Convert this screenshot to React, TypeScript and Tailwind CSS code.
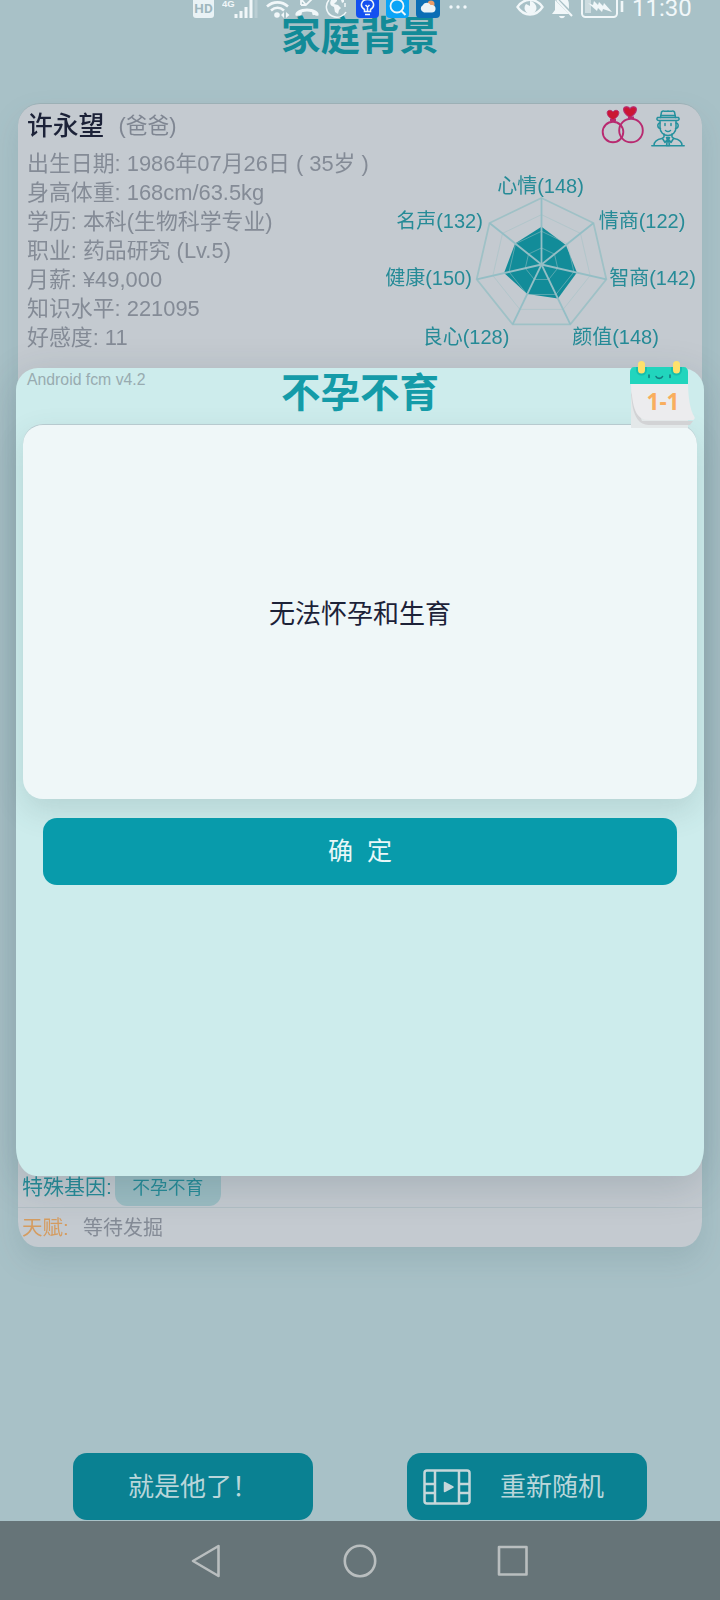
import type { ReactNode } from 'react';

const PROFILE_ROWS = [
  '出生日期: 1986年07月26日 ( 35岁 )',
  '身高体重: 168cm/63.5kg',
  '学历: 本科(生物科学专业)',
  '职业: 药品研究 (Lv.5)',
  '月薪: ¥49,000',
  '知识水平: 221095',
  '好感度: 11',
];

// Label positions are relative to the chart's own canvas
const STATS = [
  { name: '心情', value: 148, x: 160.5, y: 23 },
  { name: '情商', value: 122, x: 262, y: 58 },
  { name: '智商', value: 142, x: 272.5, y: 115 },
  { name: '颜值', value: 148, x: 235.5, y: 174 },
  { name: '良心', value: 128, x: 86, y: 174 },
  { name: '健康', value: 150, x: 48.5, y: 115 },
  { name: '名声', value: 132, x: 59.5, y: 58 },
];

const CENTER = { x: 161.5, y: 94.5 };
const RADIUS = 66.5;
const MAX_STAT = 260;

const pointAt = (index: number, radius: number) => {
  const angle = (Math.PI * 2 * index) / STATS.length - Math.PI / 2;
  return [CENTER.x + radius * Math.cos(angle), CENTER.y + radius * Math.sin(angle)];
};

const ringPoints = (radius: number) => STATS.map((_, i) => pointAt(i, radius).join(',')).join(' ');

const RadarChart = () => (
  <svg width="320" height="185" viewBox="0 0 320 185" className="shrink-0">
    <polygon
      points={STATS.map((s, i) => pointAt(i, (s.value / MAX_STAT) * RADIUS).join(',')).join(' ')}
      fill="#128c99"
    />
    {[0.25, 0.5, 0.75, 1].map((scale) => (
      <polygon
        key={scale}
        points={ringPoints(RADIUS * scale)}
        fill="none"
        stroke="#9fc1c6"
        strokeOpacity={scale === 1 ? 1 : 0.5}
        strokeWidth={scale === 1 ? 1.8 : 1}
      />
    ))}
    {STATS.map((s, i) => {
      const [x, y] = pointAt(i, RADIUS);
      return <line key={s.name} x1={CENTER.x} y1={CENTER.y} x2={x} y2={y} stroke="#94bec5" strokeWidth="1.8" />;
    })}
    {STATS.map((s) => (
      <text key={s.name} x={s.x} y={s.y} textAnchor="middle" fontSize="20" fill="#268b97">
        {s.name}({s.value})
      </text>
    ))}
  </svg>
);

const HEART = 'M0 4.5C-4.5 1.5-5.8-.5-5.8-2.8-5.8-5.6-1.6-6 0-3.4 1.6-6 5.8-5.6 5.8-2.8 5.8-.5 4.5 1.5 0 4.5Z';

const RingsIcon = () => (
  <svg width="44" height="38" viewBox="0 0 44 38" fill="none" stroke="#b82a70" strokeWidth="1.9">
    <circle cx="12" cy="26" r="10.3" />
    <circle cx="30" cy="24.5" r="11.8" />
    <path d="M9 14h6M27 11.5h6" />
    <path d={HEART} transform="translate(12 9.5)" fill="#cb1633" strokeWidth="1" />
    <path d={HEART} transform="translate(29 6.5) scale(1.1)" fill="#cb1633" strokeWidth="1" />
  </svg>
);

const GentlemanIcon = () => (
  <svg width="34" height="38" viewBox="0 0 34 38" fill="none" stroke="#25919e" strokeWidth="1.5" strokeLinecap="round" strokeLinejoin="round">
    <path d="M.8 36.800h32.400M3 36.500c0-4 2-6 8-7l2-1.500v-3M31 36.500c0-4-2-6-8-7L21 28v-3" />
    <path d="M9 12v6.500c0 4.500 3.500 8 8 8s8-3.500 8-8V12" />
    <path d="M9 14c-3 0-3 5.500.5 5.500M25 14c3 0 3 5.500-.5 5.500" />
    <path d="M9.500 8.500 10.500 3c1.500-2 3 0 6.500-1 3.500 1 5-1 6.500 1l1 5.500" />
    <path d="M6.500 8.500h21c1.200 1.500.5 3-1 3h-19c-1.500 0-2.200-1.500-1-3ZM10 6.500h14" />
    <path d="M14 14.500v2M20 14.500v2M14.500 21.500c1.500 1.300 3.500 1.300 5 0" />
    <path d="m11.500 29.500 2.500 4 3-4 3 4 2.500-4M15.500 28.500h3L17.500 31l1 5.500h-3l1-5.500-1-2.500" />
  </svg>
);

const CalendarIcon = () => (
  <svg width="66" height="68" viewBox="0 0 66 68">
    <path d="M1 20h57v47H1Z" fill="#e3e8e9" />
    <path d="M1 31c1 16 3 24 9 30 3 2.500 7 3 12 3h38l3-4H12Z" fill="#d2d3d5" />
    <path d="M1 20h57c0 16 2 29 6.500 36 .5 1.500 0 3-2 3H19C6 59 2 48 1 20Z" fill="#ececee" />
    <path d="M0 23V11c0-3 1.500-5 4.500-5h49c3 0 4.500 2 4.500 5v12Z" fill="#21d5bd" />
    <path d="M6 6v3a5.500 5.500 0 0 0 11 0V6M41 6v3a5.500 5.500 0 0 0 11 0V6" fill="#16bfae" />
    <rect x="8" width="7" height="12.500" rx="3.500" fill="#ffe16b" />
    <rect x="43" width="7" height="12.500" rx="3.500" fill="#ffe16b" />
    <g fill="none" stroke="#147c80" strokeWidth="1.600" strokeLinecap="round">
      <path d="M19 14v2.500M40 14v2.500M26 15.500c1 2.500 5.500 2.500 6.500 0" />
    </g>
    <text x="33" y="49" textAnchor="middle" fontSize="22.500" fontWeight="700" fill="#f9ae5e" className="[font-family:'Noto_Sans',sans-serif]">
      1-1
    </text>
  </svg>
);

const FilmIcon = () => (
  <svg width="48" height="36" viewBox="0 0 48 36" fill="none" stroke="#c6d7da" strokeWidth="2.500">
    <rect x="1.500" y="1.500" width="45" height="33" rx="2.500" />
    <path d="M12 1.500v33M36 1.500v33M1.500 15H12M1.500 24H12M36 15h10.500M36 24h10.500" />
    <path d="M21.500 13.500v9l8.500-4.500Z" fill="#c6d7da" strokeWidth="1.500" strokeLinejoin="round" />
  </svg>
);

const StatusIcon = ({ width, className, children }: { width: number; className?: string; children: ReactNode }) => (
  <svg
    width={width}
    height="20"
    viewBox={`0 0 ${width} 20`}
    fill="none"
    stroke="#f1f7f9"
    strokeWidth="1.800"
    className={`shrink-0 ${className ?? ''}`}
  >
    {children}
  </svg>
);

const StatusBar = () => (
  <div className="absolute inset-x-0 top-0 flex h-5 items-start pl-[193px]">
    <StatusIcon width={21}>
      <rect y="-5" width="21" height="23" rx="3" fill="#e9f2f5" stroke="none" />
      <text x="10.500" y="13" textAnchor="middle" fontSize="13.500" fontWeight="700" fill="#9eb7be" stroke="none" className="[font-family:Roboto,sans-serif]">HD</text>
    </StatusIcon>
    <StatusIcon width={37} className="ml-2">
      <text x="0" y="6.500" fontSize="9.500" fontWeight="700" fill="#f1f7f9" stroke="none">4G</text>
      <path d="M14 18v-4M19 18v-7M24 18V7M29 18V0" strokeWidth="3" />
      <path d="M34 18V0" strokeWidth="3" strokeOpacity=".25" />
    </StatusIcon>
    <StatusIcon width={25} className="ml-[7px]">
      <path d="M1 6.500c6-5.500 15-5.500 21 0M5 10.500c4-3.500 9-3.500 13 0" strokeWidth="2.600" />
      <circle cx="11" cy="15" r="2.800" fill="#f1f7f9" stroke="none" />
      <path d="m18 12-3 3 3 3ZM20 12l3.500 3-3.500 3Z" fill="#f1f7f9" stroke="none" />
    </StatusIcon>
    <StatusIcon width={24} className="ml-1">
      <path d="M6-1 11 5 18-2M6 5V0M6 5h4" />
      <path d="M.5 15.500c-.5-2 .5-3.500 2.500-4.700 5-3.200 13-3.200 18 0 2 1.200 3 2.700 2.500 4.700-2 .5-4.500 0-6-.7l-.5-2.500c-3.500-1-6.500-1-10 0l-.5 2.500c-1.500.7-4 1.200-6 .7Z" fill="#f1f7f9" stroke="none" />
    </StatusIcon>
    <StatusIcon width={24} className="ml-1.5">
      <path d="M4 0C-.5 5 1 13 7 16c6 3 12 0 14-4M20 3v4" strokeWidth="1.500" />
      <path d="M6 0C4 4 6 6 9 7l1 5 3 2 1-4 2-2-3-3-4-1 3-3V0ZM16 0l1 3 2-1V0Z" fill="#f1f7f9" stroke="none" />
    </StatusIcon>
    <StatusIcon width={23} className="ml-[7px]">
      <rect y="-5" width="23" height="23" rx="4" fill="#1450f0" stroke="none" />
      <path d="M8.500 11.500V9.500C3 6 5.500-.5 11.500-.5s8.500 6.500 3 10v2ZM9 14.500h5M11.500 11V6M9.500 5l2 2 2-2" strokeWidth="1.500" />
    </StatusIcon>
    <StatusIcon width={23} className="ml-[7px]">
      <rect y="-5" width="23" height="23" rx="4" fill="#0ba4f7" stroke="none" />
      <circle cx="11" cy="6" r="6.500" />
      <path d="m15.500 11 4 4" strokeWidth="2" />
    </StatusIcon>
    <StatusIcon width={24} className="ml-[7px]">
      <rect y="-5" width="24" height="23" rx="4" fill="#0b6db5" stroke="none" />
      <circle cx="15" cy="4" r="3.500" fill="#e99b69" stroke="none" />
      <path d="M8 12.500a4 4 0 0 1-1-7.500c1.500-3 6-3 7.500 0 4-.5 5.500 2 5 4.500-.3 2-1.500 3-3.500 3Z" fill="#eaf2f7" stroke="none" />
    </StatusIcon>
    <StatusIcon width={18} className="ml-[9px]">
      <g fill="#f1f7f9" stroke="none">
        <circle cx="2" cy="7" r="1.700" />
        <circle cx="9" cy="7" r="1.700" />
        <circle cx="16" cy="7" r="1.700" />
      </g>
    </StatusIcon>
    <StatusIcon width={28} className="ml-[49px]">
      <path d="M1.500 7C8-2.500 20-2.500 26.500 7 20 17 8 17 1.500 7Z" strokeWidth="2.300" />
      <path d="M14 1v5l-4-2a6 6 0 1 0 9 0c-1.500-2-3-3-5-3Z" fill="#f1f7f9" stroke="none" />
    </StatusIcon>
    <StatusIcon width={22} className="ml-[7px]">
      <path d="M4 0 18 14H1l3-4ZM8-1h8c2 2 2 4 2 10ZM8 16h6c-1 3-5 3-6 0Z" fill="#f1f7f9" stroke="none" />
      <path d="m6 0 15 16" strokeWidth="2" />
    </StatusIcon>
    <StatusIcon width={44} className="ml-2">
      <rect x="1" y="-4" width="35" height="21" rx="3.500" strokeWidth="2" />
      <path d="M4 0h6v13H4Z" fill="#f1f7f9" fillOpacity=".5" stroke="none" />
      <path d="m7 3 9 8 1-3 4 4 1-3 9 3-8-9-1 3-4-4-1 3-4-4-1 4Z" fill="#f1f7f9" stroke="none" />
      <path d="M41 1v11" strokeWidth="2.600" />
    </StatusIcon>
    <span className="ml-[7px] text-[24px] leading-[17px] text-[#f1f7f9] [font-family:Roboto,sans-serif]">11:30</span>
  </div>
);

const NavBar = () => (
  <div className="flex h-[79px] items-center bg-[#667478] pl-[190px]">
    <svg width="338" height="36" viewBox="0 0 338 36" fill="none" stroke="#b9bebf" strokeWidth="2.600" strokeLinejoin="round">
      <path d="M28.500 3v30L3 18Z" />
      <circle cx="170" cy="18" r="15.200" />
      <rect x="309" y="4" width="27.500" height="27.500" />
    </svg>
  </div>
);

const ProfileCard = () => (
  <section className="mx-[18px] mt-[41px] flex h-[1144px] flex-col overflow-hidden rounded-[22px_22px_20px_20px/22px_22px_26px_26px] border-t border-[#9cb0b5] bg-[#c4cad0]">
    <div className="flex h-11 items-start justify-between pl-[9px] pr-[17px]">
      <h2 className="mt-[3px] flex items-center text-[25.800px] font-medium leading-[38px] text-[#1c2238]">
        许永望
        <span className="ml-3.5 text-[21.800px] font-normal text-[#7f8692]">(爸爸)</span>
      </h2>
      <div className="flex gap-[6px] pt-[2px]">
        <RingsIcon />
        <div className="mt-[3px]">
          <GentlemanIcon />
        </div>
      </div>
    </div>
    <div className="flex h-[211px]">
      <ul className="w-[362px] shrink-0 pl-[9px] pt-px text-[21.900px] leading-[29px] text-[#848b96]">
        {PROFILE_ROWS.map((row) => (
          <li key={row} className="h-[29px] whitespace-nowrap">{row}</li>
        ))}
      </ul>
      <div className="mt-[22px]">
        <RadarChart />
      </div>
    </div>
    <div className="mt-auto flex h-[42px] items-start border-b border-[#b2bfc5] pl-[4px] text-[21px] leading-[42px] text-[#268b97]">
      <span>特殊基因:</span>
      <span className="ml-[3px] flex h-10 w-[106px] items-center justify-center rounded-xl bg-[#9bbcc2] pt-[3px] text-[17.800px]">不孕不育</span>
    </div>
    <div className="flex h-[39px] items-center pl-[4px] pt-px text-[20.500px] text-[#848b96]">
      <span className="w-[61px] text-[#d59c60]">天赋:</span>
      <span className="text-[20px]">等待发掘</span>
    </div>
  </section>
);

const TraitDialog = () => (
  <div className="absolute left-4 top-[368px] h-[808px] w-[688px] rounded-[22px_22px_20px_20px/22px_22px_28px_28px] bg-[#cdecec] shadow-[0_10px_40px_rgba(30,60,70,0.180)]">
    <header className="relative flex h-14 justify-center">
      <span className="absolute left-[11px] top-[2px] text-[15.800px] leading-5 text-[#98abb0]">Android fcm v4.2</span>
      <h2 className="mt-px text-[39.500px] font-bold leading-[48px] text-[#149ba8]">不孕不育</h2>
      <div className="absolute -top-[7px] left-[614px] z-10">
        <CalendarIcon />
      </div>
    </header>
    <div className="mx-[7px] flex h-[375px] items-center justify-center rounded-[20px] border-t border-[#b7cacf] bg-[#eff7f8] pt-1 text-[26px] text-[#1c2238] shadow-[0_12px_30px_rgba(60,90,90,0.160)]">
      无法怀孕和生育
    </div>
    <button className="relative mx-[27px] mt-[19px] flex h-[67px] w-[634px] items-center justify-center rounded-[14px] bg-[#089bab] text-[25px] text-[#e8f7f8]">
      <span className="whitespace-pre">确  定</span>
    </button>
  </div>
);

export default function App() {
  return (
    <div className="relative flex h-[1600px] w-[720px] flex-col overflow-hidden bg-[#a8c1c7] font-['Liberation_Sans','Noto_Sans_CJK_SC',sans-serif]">
      <h1 className="mt-[11px] text-center text-[39.500px] font-bold leading-[51px] text-[#128b98]">家庭背景</h1>
      <div className="drop-shadow-[0_14px_14px_rgba(50,80,90,0.120)]">
        <ProfileCard />
      </div>
      <div className="mt-auto mb-px flex gap-[94px] pl-[73px] text-[26px] text-[#b9d6da]">
        <button className="flex h-[67px] w-60 items-center justify-center rounded-[14px] bg-[#0a8192] pt-0.5">
          <span>就是他了！</span>
        </button>
        <button className="flex h-[67px] w-60 items-center rounded-[14px] bg-[#0a8192] pl-4">
          <FilmIcon />
          <span className="ml-[29px] pt-0.5">重新随机</span>
        </button>
      </div>
      <NavBar />
      <TraitDialog />
      <StatusBar />
    </div>
  );
}
